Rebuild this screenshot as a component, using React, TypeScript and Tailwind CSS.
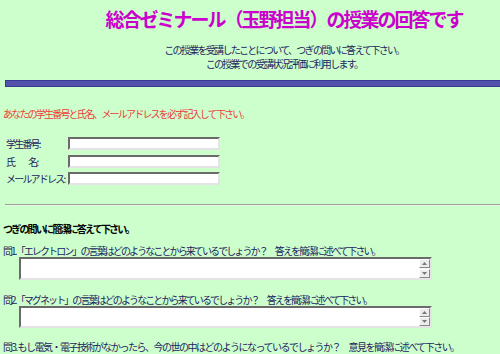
import React from "react";

const jp = "font-['Noto_Sans_CJK_JP','Noto_Sans',sans-serif]";

const Field = ({ label }: { label: React.ReactNode }) => (
  <div className="flex items-center h-[13px]">
    <span className="w-[62px] whitespace-nowrap text-[10px] leading-[13px] tracking-[-1.8px] text-[#23235e]">{label}</span>
    <input
      className="w-[152px] h-[13px] bg-white border-2 border-t-[#6a6a6a] border-l-[#6a6a6a] border-b-[#e4e4e4] border-r-[#e4e4e4] outline-none"
      readOnly
    />
  </div>
);

const AnswerBox = ({ h }: { h: string }) => (
  <div className={`ml-[19px] w-[413px] ${h} flex bg-white border-2 border-t-[#6a6a6a] border-l-[#6a6a6a] border-b-[#e4e4e4] border-r-[#e4e4e4]`}>
    <div className="flex-1" />
    <div className="w-[11px] flex flex-col justify-between bg-[#f4f4f4]">
      <div className="h-[9px] flex items-center justify-center bg-[#ececec] border border-t-white border-l-white border-b-[#888] border-r-[#888]">
        <svg width="5" height="3" viewBox="0 0 5 3"><path d="M2.5 0L5 3H0z" fill="#777" /></svg>
      </div>
      <div className="h-[9px] flex items-center justify-center bg-[#ececec] border border-t-white border-l-white border-b-[#888] border-r-[#888]">
        <svg width="5" height="3" viewBox="0 0 5 3"><path d="M0 0H5L2.5 3z" fill="#777" /></svg>
      </div>
    </div>
  </div>
);

export default function App() {
  return (
    <div className={`w-[500px] h-[354px] overflow-hidden bg-[#ccffcc] ${jp}`}>
      <div className="w-[568px]">
        {/* header */}
        <h1 className="pt-[7px] text-center text-[19px] leading-[24px] font-bold tracking-[-2px] text-[#cc00cc]">
          総合ゼミナール（玉野担当）の授業の回答です
        </h1>
        <div className="mt-[12px] text-center text-[10px] leading-[14px] tracking-[-1.7px] text-[#23235e]">
          <p>この授業を受講したことについて、つぎの問いに答えて下さい。</p>
          <p>この授業での受講状況評価に利用します。</p>
        </div>
        <div className="ml-[5px] mt-[9px] h-[7px] bg-[#5252ad] border border-[#3a3a90]" />

        {/* student info */}
        <p className="mt-[20px] pl-[3px] whitespace-nowrap text-[10px] leading-[14px] tracking-[-1.8px] text-[#f03a3a]">
          あなたの学生番号と氏名、メールアドレスを必ず記入して下さい。
        </p>
        <div className="mt-[16px] pl-[6px] flex flex-col gap-[4.5px]">
          <Field label="学生番号:" />
          <Field label={<span className="flex gap-[14px]"><span>氏</span><span>名:</span></span>} />
          <Field label="メールアドレス:" />
        </div>

        <div className="ml-[5px] mt-[19px] h-[2px] border-t border-t-[#9c9c9c] border-b border-b-[#e6f8e6]" />

        {/* questions */}
        <p className="mt-[16px] pl-[3px] whitespace-nowrap text-[10px] leading-[14px] tracking-[-1.8px] font-bold text-black">
          つぎの問いに簡潔に答えて下さい。
        </p>
        <p className="mt-[8px] pl-[3px] whitespace-nowrap text-[10px] leading-[13px] tracking-[-1.9px] text-[#23235e]">
          問1.「エレクトロン」の言葉はどのようなことから来ているでしょうか？　答えを簡潔に述べて下さい。
        </p>
        <AnswerBox h="h-[23px]" />
        <p className="mt-[13px] pl-[3px] whitespace-nowrap text-[10px] leading-[13px] tracking-[-1.9px] text-[#23235e]">
          問2.「マグネット」の言葉はどのようなことから来ているでしょうか？　答えを簡潔に述べて下さい。
        </p>
        <AnswerBox h="h-[22px]" />
        <p className="mt-[12px] pl-[3px] whitespace-nowrap text-[10px] leading-[13px] tracking-[-1.5px] text-[#23235e]">
          問3. もし電気・電子技術がなかったら、今の世の中はどのようになっているでしょうか？　意見を簡潔に述べて下さい。
        </p>
      </div>
    </div>
  );
}
